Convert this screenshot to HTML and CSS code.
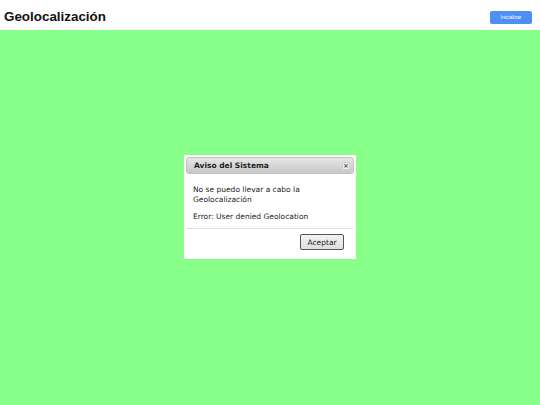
FILE: index.html
```html
<!DOCTYPE html>
<html>
<head>
<meta charset="utf-8">
<link rel="stylesheet" href="styles.css">
</head>
<body>
<div class="header">
  <h1 class="title">Geolocalización</h1>
  <button class="init">Inicializar</button>
</div>
<div class="map">
  <div class="dialog">
    <div class="dtitle">
      <span>Aviso del Sistema</span>
      <span class="close">×</span>
    </div>
    <div class="dbody">
      <p>No se puedo llevar a cabo la Geolocalización</p>
      <p>Error: User denied Geolocation</p>
    </div>
    <div class="dfoot">
      <button class="ok">Aceptar</button>
    </div>
  </div>
</div>
</body>
</html>
```
FILE: styles.css
```css
html, body { margin: 0; padding: 0; height: 100%; }
body { font-family: "Liberation Sans", Arial, sans-serif; display: flex; flex-direction: column; }
.header { height: 30px; background: #fff; display: flex; align-items: center; justify-content: space-between; padding: 0 8px 0 4px; box-sizing: border-box; }
.title { margin: 0; font-size: 13.4px; font-weight: bold; color: #111; position: relative; top: 1px; }
.init { width: 42px; height: 13px; padding: 0; border: none; border-radius: 2px; background: #4d8ff5; color: #fff; font-family: "Liberation Sans", Arial, sans-serif; font-size: 5px; position: relative; top: 2px; }
.map { flex: 1; background: #88ff88; display: flex; align-items: center; justify-content: center; }
.dialog { width: 172px; height: 104px; background: #fff; box-sizing: border-box; padding: 2px; display: flex; flex-direction: column; margin-top: -21px; font-family: "DejaVu Sans", Verdana, sans-serif; }
.dtitle { height: 17px; flex: none; border-radius: 3px; background: linear-gradient(#e6e6e6, #c8c8c8); border: 1px solid #c2c2c2; box-sizing: border-box; display: flex; align-items: center; justify-content: space-between; padding: 0 3px 0 7px; font-size: 7.5px; font-weight: bold; color: #222; }
.close { width: 8px; height: 8px; background: #eee; border: 1px solid #d0d0d0; box-sizing: border-box; font-size: 7px; line-height: 6px; text-align: center; color: #555; font-weight: bold; }
.dbody { padding: 11px 6px 6px 6px; font-size: 7.5px; color: #222; line-height: 10px; border-bottom: 1px solid #ddd; margin: 0 1px; flex: none; }
.dbody p { margin: 0 0 7px 0; width: 150px; }
.dbody p:last-child { margin-bottom: 0; }
.dfoot { display: flex; justify-content: flex-end; padding: 5px 10px 0 0; }
.ok { width: 44px; height: 16px; padding: 0; border: 1px solid #555; border-radius: 2px; background: linear-gradient(#f4f4f4, #dedede); font-family: "DejaVu Sans", Verdana, sans-serif; font-size: 7.5px; color: #222; }
```
